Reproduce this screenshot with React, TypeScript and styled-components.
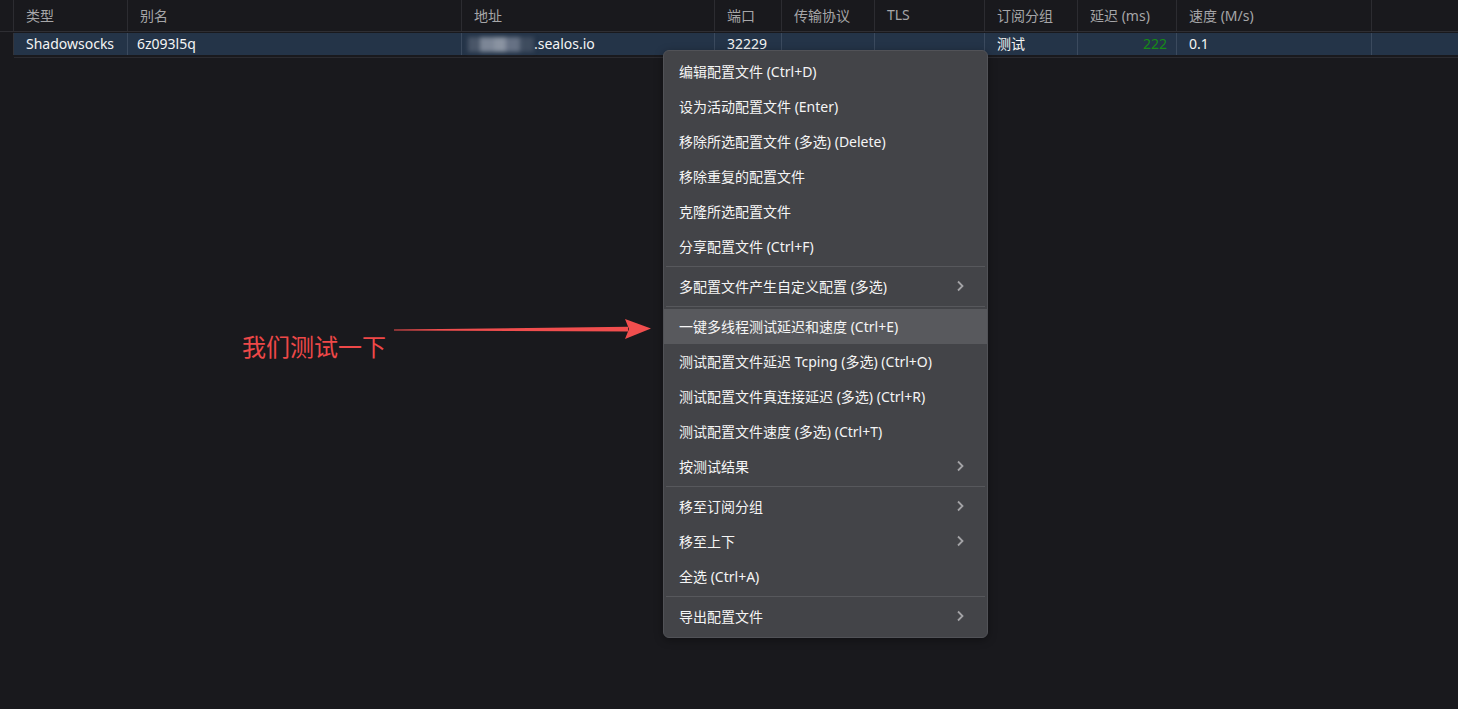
import React from 'react';
import styled, { createGlobalStyle } from 'styled-components';

const GlobalStyle = createGlobalStyle`
  html, body {
    margin: 0;
    padding: 0;
    background: #19191d;
    height: 100%;
    overflow: hidden;
  }
  body {
    font-family: "Noto Sans", "Noto Sans CJK SC", sans-serif;
    font-size: 14px;
    color: #f2f2f2;
  }
`;

const columns = '14px 114px 334px 253px 67px 93px 110px 93px 99px 195px 1fr';

const headers = ['', '类型', '别名', '地址', '端口', '传输协议', 'TLS', '订阅分组', '延迟 (ms)', '速度 (M/s)', ''];

type MenuEntry =
  | { kind: 'item'; label: string; sub?: boolean; active?: boolean }
  | { kind: 'sep' };

const menu: MenuEntry[] = [
  { kind: 'item', label: '编辑配置文件 (Ctrl+D)' },
  { kind: 'item', label: '设为活动配置文件 (Enter)' },
  { kind: 'item', label: '移除所选配置文件 (多选) (Delete)' },
  { kind: 'item', label: '移除重复的配置文件' },
  { kind: 'item', label: '克隆所选配置文件' },
  { kind: 'item', label: '分享配置文件 (Ctrl+F)' },
  { kind: 'sep' },
  { kind: 'item', label: '多配置文件产生自定义配置 (多选)', sub: true },
  { kind: 'sep' },
  { kind: 'item', label: '一键多线程测试延迟和速度 (Ctrl+E)', active: true },
  { kind: 'item', label: '测试配置文件延迟 Tcping (多选) (Ctrl+O)' },
  { kind: 'item', label: '测试配置文件真连接延迟 (多选) (Ctrl+R)' },
  { kind: 'item', label: '测试配置文件速度 (多选) (Ctrl+T)' },
  { kind: 'item', label: '按测试结果', sub: true },
  { kind: 'sep' },
  { kind: 'item', label: '移至订阅分组', sub: true },
  { kind: 'item', label: '移至上下', sub: true },
  { kind: 'item', label: '全选 (Ctrl+A)' },
  { kind: 'sep' },
  { kind: 'item', label: '导出配置文件', sub: true },
];

function Chevron() {
  return (
    <svg width="8" height="12" viewBox="0 0 8 12">
      <path d="M2 1.5 L6.5 6 L2 10.5" fill="none" stroke="#a3a3a6" strokeWidth="1.8" />
    </svg>
  );
}

function Arrow() {
  return (
    <svg width="258" height="24" viewBox="0 0 258 24">
      <polygon points="0,12.6 234,9.8 234,14.6 0,13.4" fill="#f04e4e" />
      <polygon points="231,2 257,11.5 231,22 235,12" fill="#f04e4e" />
    </svg>
  );
}

export default function App() {
  return (
    <Page>
      <GlobalStyle />
      <Table>
        <HeaderRow>
          {headers.map((h, i) => (
            <HeadCell key={i} $last={i === headers.length - 1}>
              {h}
            </HeadCell>
          ))}
        </HeaderRow>
        <DataRow>
          <Gutter />
          <Cell>Shadowsocks</Cell>
          <Cell $pad={9}>6z093l5q</Cell>
          <Cell $pad={6}>
            <Blur>
              <BlurBlock $w={12} $c="#4a5668" />
              <BlurBlock $w={14} $c="#7c8696" />
              <BlurBlock $w={12} $c="#8a93a1" />
              <BlurBlock $w={14} $c="#667184" />
              <BlurBlock $w={14} $c="#56627388" />
            </Blur>
            .sealos.io
          </Cell>
          <Cell>32229</Cell>
          <Cell />
          <Cell />
          <Cell>测试</Cell>
          <Cell $align="right" $color="#168b16">222</Cell>
          <Cell>0.1</Cell>
          <Cell $last />
        </DataRow>
        <RowRule />
      </Table>

      <Annotation>
        <Note>我们测试一下</Note>
        <Arrow />
      </Annotation>

      <Menu>
        {menu.map((m, i) =>
          m.kind === 'sep' ? (
            <Separator key={i} />
          ) : (
            <MenuItem key={i} $active={m.active}>
              <span>{m.label}</span>
              {m.sub && <Chevron />}
            </MenuItem>
          )
        )}
      </Menu>
    </Page>
  );
}

const Page = styled.div`
  position: relative;
  width: 100vw;
  height: 100vh;
  background: #19191d;
`;

const Table = styled.div`
  display: flex;
  flex-direction: column;
`;

const HeaderRow = styled.div`
  display: grid;
  grid-template-columns: ${columns};
  height: 31px;
  border-bottom: 1px solid #2e2e33;
`;

const HeadCell = styled.div<{ $last?: boolean }>`
  display: flex;
  align-items: center;
  padding: 0 12px 2px;
  color: #a6a6a8;
  white-space: nowrap;
  border-right: ${(p) => (p.$last ? 'none' : '1px solid #2c2c31')};
  &:first-child {
    padding: 0;
  }
`;

const DataRow = styled.div`
  display: grid;
  grid-template-columns: ${columns};
  height: 22px;
  margin-top: 1px;
`;

const Gutter = styled.div`
  border-right: 1px solid #33343a;
`;

const Cell = styled.div<{ $pad?: number; $align?: string; $color?: string; $last?: boolean }>`
  display: flex;
  align-items: center;
  justify-content: ${(p) => (p.$align === 'right' ? 'flex-end' : 'flex-start')};
  padding: 0 ${(p) => (p.$align === 'right' ? 9 : 12)}px 2px ${(p) => p.$pad ?? 12}px;
  background: #243448;
  color: ${(p) => p.$color ?? '#f4f4f4'};
  white-space: nowrap;
  border-right: ${(p) => (p.$last ? 'none' : '1px solid #3b4a5e')};
`;

const Blur = styled.span`
  display: inline-flex;
  height: 15px;
  margin-top: 2px;
  filter: blur(2px);
`;

const BlurBlock = styled.span<{ $w: number; $c: string }>`
  display: inline-block;
  width: ${(p) => p.$w}px;
  height: 15px;
  background: ${(p) => p.$c};
`;

const RowRule = styled.div`
  margin-top: 2px;
  margin-left: 14px;
  height: 1px;
  background: #2b2b30;
`;

const Annotation = styled.div`
  position: absolute;
  left: 242px;
  top: 317px;
  display: flex;
  align-items: flex-start;
`;

const Note = styled.div`
  margin-top: 12px;
  margin-right: 8px;
  font-size: 24px;
  line-height: 34px;
  color: #ee4848;
  font-family: "Noto Sans CJK SC", sans-serif;
`;

const Menu = styled.div`
  position: absolute;
  left: 663px;
  top: 50px;
  width: 323px;
  padding: 3px 0;
  background: #434448;
  border: 1px solid #515257;
  border-radius: 6px;
  box-shadow: 0 2px 8px rgba(0, 0, 0, 0.35);
`;

const MenuItem = styled.div<{ $active?: boolean }>`
  display: flex;
  align-items: center;
  justify-content: space-between;
  height: 35px;
  box-sizing: border-box;
  padding: 0 23px 2px 15px;
  background: ${(p) => (p.$active ? '#58595d' : 'transparent')};
  color: #f5f5f5;
  white-space: nowrap;
`;

const Separator = styled.div`
  height: 1px;
  margin: 2px 2px;
  background: #57585c;
`;
